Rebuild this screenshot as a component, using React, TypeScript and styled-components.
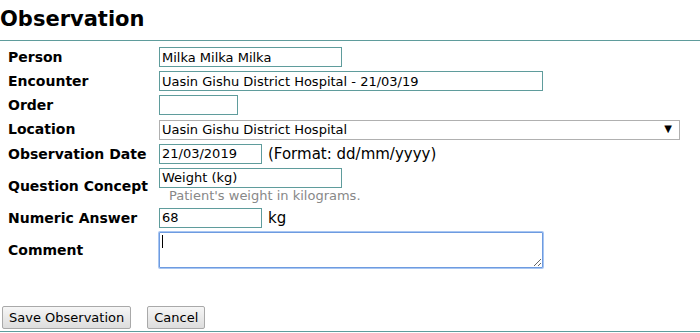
import styled, { createGlobalStyle } from "styled-components";

const GlobalStyle = createGlobalStyle`
  body {
    margin: 0;
    background: #ffffff;
    font-family: "DejaVu Sans", Verdana, sans-serif;
    color: #000000;
  }
`;

const Page = styled.div`
  width: 700px;
  height: 333px;
  overflow: hidden;
  display: flex;
  flex-direction: column;
`;

const Title = styled.h1`
  margin: 0;
  padding: 7px 0 8px 0;
  line-height: 25px;
  font-size: 21px;
  font-weight: bold;
  border-bottom: 1px solid #5f9c9c;
`;

const Form = styled.form`
  display: flex;
  flex-direction: column;
  border-bottom: 1px solid #5f9c9c;
  padding-bottom: 2px;
`;

const Fields = styled.div`
  display: grid;
  grid-template-columns: 151px 1fr;
  row-gap: 4px;
  padding: 6px 0 0 8px;
`;

const Label = styled.div`
  align-self: center;
  font-size: 14px;
  font-weight: bold;
  white-space: nowrap;
`;

const Field = styled.div`
  display: flex;
  flex-direction: column;
  align-items: flex-start;
`;

const Line = styled.div`
  display: flex;
  align-items: center;
  gap: 6px;
`;

const TextInput = styled.input<{ $w: number }>`
  box-sizing: border-box;
  width: ${(p) => p.$w}px;
  height: 20px;
  margin: 0;
  padding: 0 2px;
  border: 1px solid #5f9c9c;
  font-family: "DejaVu Sans", Verdana, sans-serif;
  font-size: 13px;
  color: #000;
  background: #fff;
  outline: none;
`;

const SelectWrap = styled.div`
  position: relative;
  width: 521px;
`;

const Select = styled.select`
  box-sizing: border-box;
  width: 100%;
  height: 20px;
  margin: 0;
  padding: 0 2px;
  border: 1px solid #b0b0b0;
  border-radius: 0;
  appearance: none;
  background: #fff;
  font-family: "DejaVu Sans", Verdana, sans-serif;
  font-size: 13px;
  color: #000;
  outline: none;
`;

const Arrow = styled.span`
  position: absolute;
  right: 8px;
  top: 3px;
  font-size: 10px;
  line-height: 14px;
  pointer-events: none;
`;

const Note = styled.span`
  font-size: 15px;
`;

const Hint = styled.div`
  margin-left: 10px;
  font-size: 13px;
  line-height: 16px;
  color: #888888;
`;

const CommentWrap = styled.div`
  position: relative;
`;

const Comment = styled.textarea`
  box-sizing: border-box;
  display: block;
  width: 384px;
  height: 36px;
  margin: 0;
  padding: 1px 2px;
  border: 1px solid #6e9be0;
  box-shadow: 0 0 0 1px #a8c6f2;
  border-radius: 1px;
  font-family: "DejaVu Sans", Verdana, sans-serif;
  font-size: 13px;
  caret-color: transparent;
  outline: none;
`;

const Caret = styled.span`
  position: absolute;
  left: 3px;
  top: 3px;
  width: 1px;
  height: 13px;
  background: #000;
  pointer-events: none;
`;

const Buttons = styled.div`
  display: flex;
  gap: 16px;
  margin: 38px 0 0 2px;
`;

const Button = styled.button`
  height: 23px;
  padding: 0 6px;
  border: 1px solid #a9a9a9;
  border-radius: 2px;
  background: linear-gradient(#f6f6f6, #dddddd);
  font-family: "DejaVu Sans", Verdana, sans-serif;
  font-size: 13px;
  color: #000;
`;

export default function App() {
  return (
    <Page>
      <GlobalStyle />
      <Title>Observation</Title>
      <Form onSubmit={(e) => e.preventDefault()}>
        <Fields>
          <Label>Person</Label>
          <Field>
            <TextInput $w={183} defaultValue="Milka Milka Milka" />
          </Field>
          <Label>Encounter</Label>
          <Field>
            <TextInput $w={384} defaultValue="Uasin Gishu District Hospital - 21/03/19" />
          </Field>
          <Label>Order</Label>
          <Field>
            <TextInput $w={79} defaultValue="" />
          </Field>
          <Label>Location</Label>
          <Field>
            <SelectWrap>
              <Select defaultValue="ug">
                <option value="ug">Uasin Gishu District Hospital</option>
              </Select>
              <Arrow>▼</Arrow>
            </SelectWrap>
          </Field>
          <Label>Observation Date</Label>
          <Field>
            <Line>
              <TextInput $w={103} defaultValue="21/03/2019" />
              <Note>(Format: dd/mm/yyyy)</Note>
            </Line>
          </Field>
          <Label>Question Concept</Label>
          <Field>
            <TextInput $w={183} defaultValue="Weight (kg)" />
            <Hint>Patient's weight in kilograms.</Hint>
          </Field>
          <Label>Numeric Answer</Label>
          <Field>
            <Line>
              <TextInput $w={103} defaultValue="68" />
              <Note>kg</Note>
            </Line>
          </Field>
          <Label>Comment</Label>
          <Field>
            <CommentWrap>
              <Comment />
              <Caret />
            </CommentWrap>
          </Field>
        </Fields>
        <Buttons>
          <Button type="submit">Save Observation</Button>
          <Button type="button">Cancel</Button>
        </Buttons>
      </Form>
    </Page>
  );
}
